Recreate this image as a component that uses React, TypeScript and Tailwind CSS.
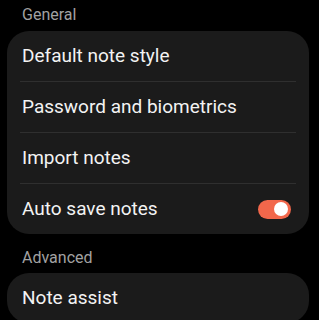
type Row = { label: string; toggle?: boolean };

const general: Row[] = [
  { label: "Default note style" },
  { label: "Password and biometrics" },
  { label: "Import notes" },
  { label: "Auto save notes", toggle: true },
];

function Toggle({ on }: { on: boolean }) {
  return (
    <div
      className={`flex h-[19px] w-[33px] items-center rounded-full px-[3px] ${
        on ? "justify-end bg-[#f2674b]" : "justify-start bg-[#555]"
      }`}
    >
      <div className="h-[14px] w-[14px] rounded-full bg-white" />
    </div>
  );
}

function Item({ row, first }: { row: Row; first: boolean }) {
  return (
    <div>
      {!first && <div className="mx-[13px] h-px bg-[#2f2f2f]" />}
      <div className="flex h-[50px] items-center justify-between pl-[15px] pr-[18px]">
        <span className="text-[19px] text-[#f3f3f3]">{row.label}</span>
        {row.toggle && <Toggle on />}
      </div>
    </div>
  );
}

export default function App() {
  return (
    <main
      className="h-[320px] w-[319px] overflow-hidden bg-black pl-[7px] pr-[10px]"
      style={{ fontFamily: "Roboto, 'Noto Sans', sans-serif" }}
    >
      <h2 className="px-[15px] pb-[8px] pt-[7px] text-[16px] leading-[16px] text-[#a2a2a2]">General</h2>
      <div className="rounded-[22px] bg-[#1b1b1b]">
        {general.map((row, i) => (
          <Item key={row.label} row={row} first={i === 0} />
        ))}
      </div>
      <h2 className="px-[15px] pb-[8px] pt-[16px] text-[16px] leading-[15px] text-[#a2a2a2]">Advanced</h2>
      <div className="rounded-[22px] bg-[#1b1b1b]">
        <Item row={{ label: "Note assist" }} first />
      </div>
    </main>
  );
}
